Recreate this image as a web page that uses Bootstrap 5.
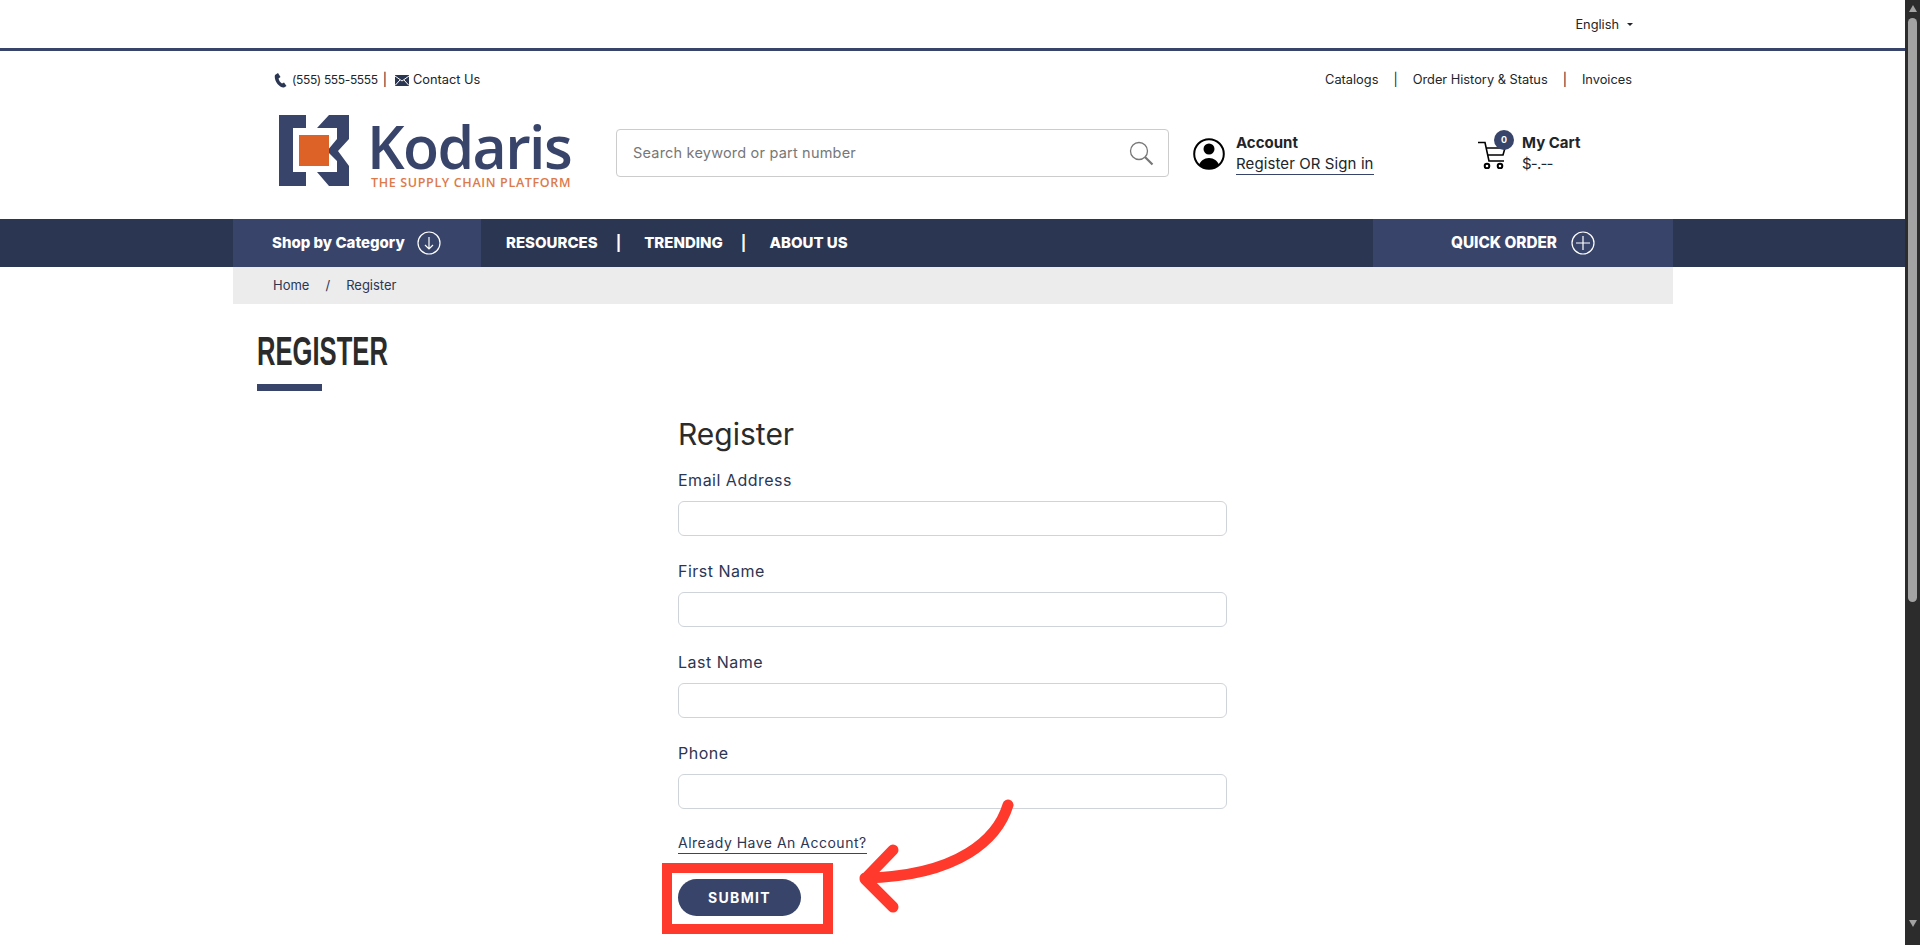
<!DOCTYPE html>
<html lang="en">

<head>
    <meta charset="UTF-8">
    <title>Register</title>
    <link href="https://cdn.jsdelivr.net/npm/bootstrap@5.3.0/dist/css/bootstrap.min.css" rel="stylesheet">
    <style>
        html, body { height: 945px; overflow: hidden; }
        body { font-family: Inter, "Liberation Sans", sans-serif; color: #212529; font-size: 12.8px; }
        a { color: inherit; text-decoration: none; }
        .page-wrap { width: 1905px; height: 945px; overflow: hidden; }
        .side-scroll { width: 15px; height: 945px; background: #2c2c2c; padding-top: 5px; }
        .scroll-up { width: 0; height: 0; margin: 0 auto; border: 4.5px solid transparent; border-top: 0; border-bottom: 7px solid #a3a3a3; }
        .scroll-down { width: 0; height: 0; margin: 318px auto 0; border: 4.5px solid transparent; border-bottom: 0; border-top: 7px solid #a3a3a3; }
        .scroll-thumb { width: 9px; height: 584px; margin: 6px auto 0; background: #a3a3a3; border-radius: 5px; }
        .lang-bar { height: 51px; border-bottom: 3px solid #38446a; }
        .site-shell { width: 1440px; margin-left: 233px; }
        .lang-inner { padding: 15px 40px 0 0; }
        .lang-inner .dropdown-toggle::after { margin-left: 8px; border-width: 3px 3px 0; vertical-align: 3px; }
        .util-row { height: 58px; padding: 0 41px 0 41px; }
        .phone-num { font-size: 12px; letter-spacing: -.35px; }
        .util-sep { margin: 0 8px 0 5px; }
        .util-gap { margin: 0 15px; }
        .head-row { height: 110px; padding: 6px 0 0 46px; }
        .logo-box { width: 337px; }
        .logo-mark { width: 70px; height: 71px; margin-right: 22px; }
        .logo-name { font-family: "Open Sans", sans-serif; font-weight: 600; font-size: 59px; line-height: 56px; color: #38446a; letter-spacing: -1.6px; margin: 3px 0 0 -4px; }
        .logo-tag { font-family: "Open Sans", sans-serif; font-weight: 600; font-size: 12.5px; line-height: 13px; color: #dd7a4a; letter-spacing: .65px; white-space: nowrap; margin-top: 2px; }
        .search-box { width: 553px; height: 48px; margin-top: 14px; border: 1px solid #ccc; border-radius: 4px; padding: 0 14px 0 16px; }
        .search-text { font-size: 14.5px; color: #777; letter-spacing: .2px; }
        .acct-box { width: 285px; margin: 17px 0 0 24px; }
        .cart-box { width: 195px; margin-top: 17px; }
        .acct-text { margin-left: 11px; font-size: 15px; line-height: 21px; }
        .acct-link { display: inline-block; border-bottom: 1px solid #38446a; line-height: 20px; letter-spacing: .1px; }
        .cart-wrap { width: 44px; }
        .cart-count { position: absolute; left: 16px; top: -2px; width: 20px; height: 20px; border-radius: 50%; background: #38446a; color: #fff; font-size: 9px; font-weight: 700; }
        .cart-total { letter-spacing: -.8px; }
        .acct-glyph { margin-top: 6px; }
        .cart-glyph { margin-top: 8px; }
        .main-nav { height: 48px; background: #2b3653; color: #fff; font-weight: 800; font-size: 15px; }
        .nav-shop { width: 248px; background: #38446a; padding-left: 39px; }
        .nav-links { padding-left: 25px; }
        .nav-split { margin: 0 23px 0 18px; font-weight: 700; }
        .nav-quick { width: 300px; background: #38446a; padding-left: 78px; font-size: 15.3px; }
        .nav-circle { margin-left: 12px; }
        .nav-quick .nav-circle { margin-left: 14px; }
        .crumb-bar { height: 37px; background: #ececec; padding-left: 40px; color: #2b3653; font-size: 13px; }
        .crumb-sep { margin: 0 16px; }
        .page-title { font-family: "Liberation Sans", sans-serif; font-weight: 700; font-size: 40px; line-height: 43px; margin: 26px 0 0 24px; color: #2b2b2b; transform: scaleX(.64); transform-origin: left center; }
        .title-bar { width: 65px; height: 7px; margin: 11px 0 0 24px; background: #38446a; }
        .reg-form { width: 549px; margin: 26px 0 0 445px; }
        .reg-heading { font-size: 30px; line-height: 34px; font-weight: 400; margin-bottom: 17px; color: #2b2b2b; }
        .reg-label { font-size: 16px; line-height: 24px; margin-bottom: 9px; letter-spacing: .5px; color: #2b3653; display: block; }
        .reg-input { height: 35px; margin-bottom: 23px; border-color: #ced4da; }
        .have-acct { display: inline-block; font-size: 14px; line-height: 21px; letter-spacing: .5px; border-bottom: 1px solid #38446a; color: #2b3653; }
        .btn-submit { display: block; width: 123px; height: 37px; margin-top: 25px; padding: 0; border: 0; border-radius: 19px; background: #38446a; color: #fff; font-size: 14px; font-weight: 700; letter-spacing: 1.3px; }
        .btn-submit:hover { background: #38446a; color: #fff; }
        .mark-layer { position: absolute; left: 0; top: 0; pointer-events: none; }
    </style>
</head>

<body class="d-flex">
    <div class="page-wrap position-relative">
        <div class="lang-bar">
            <div class="site-shell lang-inner d-flex justify-content-end">
                <a href="#" class="dropdown-toggle">English</a>
            </div>
        </div>

        <div class="site-shell">
            <!-- top links -->
            <div class="util-row d-flex justify-content-between align-items-center">
                <div class="d-flex align-items-center">
                    <svg width="14" height="15" viewBox="0 0 14 15"><path fill="#2b3653" d="M1 2 4 0l2.500 4-2 1.500c.5 2 1.800 4 3.500 5l2-1 2.500 3.500-2.500 1.500C5 15-.5 7 1 2Z"/></svg>
                    <span class="phone-num ms-1">(555) 555-5555</span>
                    <span class="util-sep">|</span>
                    <svg width="14" height="11" viewBox="0 0 14 11"><rect width="14" height="11" fill="#2b3653"/><path d="M0 1l7 5 7-5M0 10.500l5-5.500M14 10.500l-5-5.500" fill="none" stroke="#fff" stroke-width="1"/></svg>
                    <a href="#" class="ms-1">Contact Us</a>
                </div>
                <div class="d-flex align-items-center">
                    <a href="#">Catalogs</a>
                    <span class="util-gap">|</span>
                    <a href="#">Order History &amp; Status</a>
                    <span class="util-gap">|</span>
                    <a href="#">Invoices</a>
                </div>
            </div>

            <!-- logo, search, account, cart -->
            <div class="head-row d-flex align-items-start">
                <div class="logo-box d-flex flex-shrink-0">
                    <svg class="logo-mark" viewBox="0 0 70 71">
                        <path fill="#38446a" d="M0 0H27V13H14V57H27V71H0ZM38 13 50 0H70V24L59 36 70 51V71H50L38 57H58V46L48 36 58 24V13Z"/>
                        <rect x="20" y="20" width="30" height="31" fill="#dd6227"/>
                    </svg>
                    <div>
                        <div class="logo-name">Kodaris</div>
                        <div class="logo-tag">THE SUPPLY CHAIN PLATFORM</div>
                    </div>
                </div>
                <div class="search-box d-flex flex-shrink-0 align-items-center justify-content-between">
                    <span class="search-text">Search keyword or part number</span>
                    <svg width="25" height="25" viewBox="0 0 25 25"><circle cx="10" cy="10" r="8.500" fill="none" stroke="#777" stroke-width="1.300"/><path d="M16 16l7.500 7.500" stroke="#777" stroke-width="2.200"/></svg>
                </div>
                <div class="acct-box d-flex flex-shrink-0">
                    <svg class="acct-glyph" width="32" height="32" viewBox="0 0 32 32"><circle cx="16" cy="16" r="14.800" fill="#fff" stroke="#000" stroke-width="2"/><circle cx="16" cy="11" r="5.500"/><path d="M6 27c1.500-4 5-7 10-7s8.500 3 10 7c-3 2.500-6.500 4-10 4s-7-1.500-10-4Z"/></svg>
                    <div class="acct-text">
                        <div class="fw-bold">Account</div>
                        <a href="#" class="acct-link">Register OR Sign in</a>
                    </div>
                </div>
                <div class="cart-box d-flex flex-shrink-0">
                    <div class="cart-wrap position-relative">
                        <svg class="cart-glyph" width="28" height="29" viewBox="0 0 28 29"><path d="M0 2.500H7L11 21H26M8 8H27M9.500 15H25L27 8" fill="none" stroke="#000" stroke-width="1.600"/><circle cx="9" cy="26" r="2.300" fill="none" stroke="#000" stroke-width="2"/><circle cx="22" cy="26" r="2.300" fill="none" stroke="#000" stroke-width="2"/></svg>
                        <span class="cart-count d-flex align-items-center justify-content-center">0</span>
                    </div>
                    <div class="acct-text ms-0">
                        <div class="fw-bold">My Cart</div>
                        <div class="cart-total">$-.--</div>
                    </div>
                </div>
            </div>
        </div>

        <!-- main nav -->
        <div class="main-nav">
            <div class="site-shell h-100 d-flex justify-content-between">
                <div class="d-flex">
                    <div class="nav-shop d-flex align-items-center">
                        <a href="#">Shop by Category</a>
                        <svg class="nav-circle" width="24" height="24" viewBox="0 0 24 24"><circle cx="12" cy="12" r="11" fill="none" stroke="#fff" stroke-width="1.200"/><path d="M12 6v12M8 14l4 4 4-4" fill="none" stroke="#fff" stroke-width="1.200"/></svg>
                    </div>
                    <div class="nav-links d-flex align-items-center">
                        <a href="#">RESOURCES</a>
                        <span class="nav-split">|</span>
                        <a href="#">TRENDING</a>
                        <span class="nav-split">|</span>
                        <a href="#">ABOUT US</a>
                    </div>
                </div>
                <div class="nav-quick d-flex align-items-center">
                    <a href="#">QUICK ORDER</a>
                    <svg class="nav-circle" width="24" height="24" viewBox="0 0 24 24"><circle cx="12" cy="12" r="11" fill="none" stroke="#fff" stroke-width="1.200"/><path d="M12 5v14M5 12h14" fill="none" stroke="#fff" stroke-width="1.200"/></svg>
                </div>
            </div>
        </div>

        <div class="site-shell">
            <div class="crumb-bar d-flex align-items-center">
                <a href="#">Home</a>
                <span class="crumb-sep">/</span>
                <span>Register</span>
            </div>

            <h1 class="page-title">REGISTER</h1>
            <div class="title-bar"></div>

            <form class="reg-form">
                <h2 class="reg-heading">Register</h2>
                <label class="reg-label" for="email">Email Address</label>
                <input type="text" class="form-control reg-input" id="email">
                <label class="reg-label" for="firstName">First Name</label>
                <input type="text" class="form-control reg-input" id="firstName">
                <label class="reg-label" for="lastName">Last Name</label>
                <input type="text" class="form-control reg-input" id="lastName">
                <label class="reg-label" for="phone">Phone</label>
                <input type="text" class="form-control reg-input" id="phone">
                <a href="#" class="have-acct">Already Have An Account?</a>
                <button type="button" class="btn btn-submit">SUBMIT</button>
            </form>
        </div>

        <!-- red annotation over the submit button -->
        <svg class="mark-layer" width="1905" height="945" viewBox="0 0 1905 945">
            <rect x="667" y="868" width="161" height="61" fill="none" stroke="#ff3a2d" stroke-width="10"/>
            <path d="M1008 805C998 838 960 876 865 878M893 850 865 879 893 907" fill="none" stroke="#ff3a2d" stroke-width="11" stroke-linecap="round" stroke-linejoin="round"/>
        </svg>
    </div>

    <div class="side-scroll">
        <div class="scroll-up"></div>
        <div class="scroll-thumb"></div>
        <div class="scroll-down"></div>
    </div>

    <script src="https://cdn.jsdelivr.net/npm/bootstrap@5.3.0/dist/js/bootstrap.bundle.min.js"></script>
</body>

</html>
